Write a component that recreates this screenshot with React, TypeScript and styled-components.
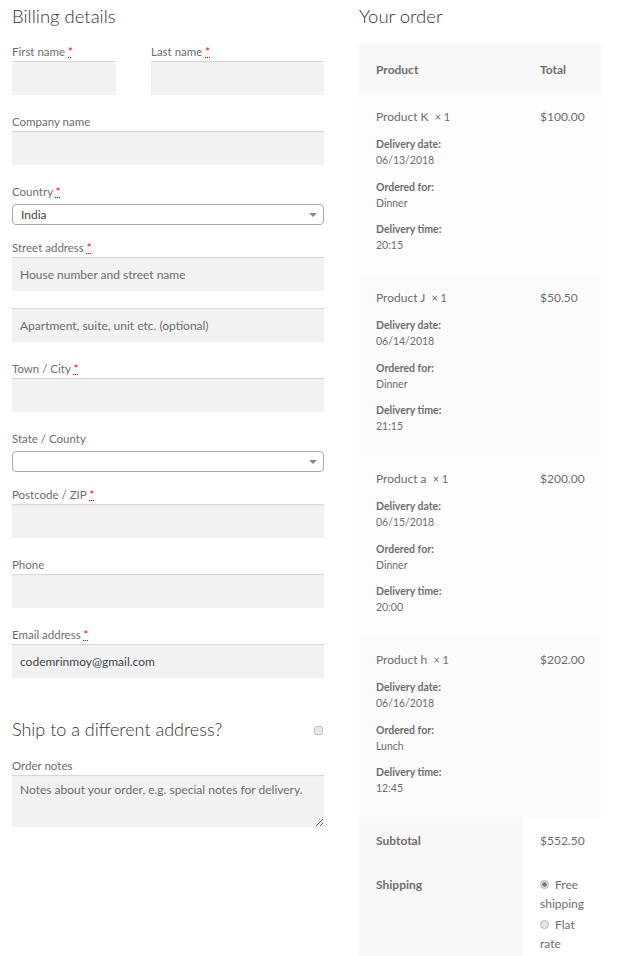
import React from 'react';
import styled, { createGlobalStyle } from 'styled-components';

const GlobalStyle = createGlobalStyle`
  body {
    margin: 0;
    background: #ffffff;
    font-family: Lato, 'Liberation Sans', sans-serif;
    color: #6d6d6d;
  }
  * { box-sizing: border-box; }
`;

const Page = styled.div`
  display: flex;
  align-items: flex-start;
  gap: 35px;
  padding: 3px 0 0 12px;
`;

const LeftColumn = styled.div`
  width: 312px;
  flex-shrink: 0;
`;

const RightColumn = styled.div`
  width: 242px;
  flex-shrink: 0;
`;

const Heading = styled.h3`
  margin: 0 0 14px;
  font-size: 18.5px;
  line-height: 26px;
  font-weight: 300;
  color: #333333;
`;

const Row = styled.div<{ $half?: number; $gap?: number }>`
  width: ${(p) => (p.$half ? `${p.$half}px` : '100%')};
  margin-bottom: ${(p) => p.$gap ?? 18}px;
`;

const HalfRows = styled.div`
  display: flex;
  justify-content: space-between;
`;

const Label = styled.label`
  display: block;
  font-size: 11.5px;
  line-height: 18px;
  color: #6d6d6d;
`;

const Required = styled.abbr`
  color: #ff0000;
  text-decoration: underline dotted #ff0000;
`;

const TextInput = styled.input<{ $mt?: number }>`
  display: block;
  width: 100%;
  height: 34px;
  margin-top: ${(p) => p.$mt ?? 0}px;
  padding: 0 8px;
  border: 0;
  outline: none;
  background: #f2f2f2;
  box-shadow: inset 0 1px 1px rgba(0, 0, 0, 0.125);
  font-family: inherit;
  font-size: 12px;
  color: #43454b;

  &::placeholder {
    color: #6d6d6d;
  }
`;

const SelectBox = styled.div`
  position: relative;
  height: 21px;
  margin-top: 3px;
  padding: 0 8px;
  border: 1px solid #aaaaaa;
  border-radius: 4px;
  background: #ffffff;
  font-size: 12px;
  line-height: 19px;
  color: #444444;

  &::after {
    content: '';
    position: absolute;
    right: 6px;
    top: 8px;
    border-style: solid;
    border-width: 4px 4px 0 4px;
    border-color: #888888 transparent transparent transparent;
  }
`;

const ShipHeading = styled.div`
  display: flex;
  align-items: center;
  justify-content: space-between;
  margin: 38px 0 15px;
`;

const ShipTitle = styled.h3`
  margin: 0;
  font-size: 18px;
  line-height: 26px;
  font-weight: 300;
  color: #333333;
`;

const Checkbox = styled.input`
  appearance: none;
  width: 9px;
  height: 9px;
  margin: 2px 1px 0 0;
  border: 1px solid #c4c4c4;
  border-radius: 2px;
  background: #e9e9e9;
`;

const Notes = styled.textarea`
  display: block;
  width: 100%;
  height: 52px;
  padding: 7px 8px;
  border: 0;
  outline: none;
  resize: vertical;
  background: #f2f2f2;
  box-shadow: inset 0 1px 1px rgba(0, 0, 0, 0.125);
  font-family: inherit;
  font-size: 12px;
  line-height: 16px;
  color: #43454b;

  &::placeholder {
    color: #6d6d6d;
  }
`;

const OrderTable = styled.table`
  width: 242px;
  margin-top: 1px;
  border-collapse: collapse;
  table-layout: fixed;
  font-size: 12px;
  color: #6d6d6d;
`;

const HeadCell = styled.th`
  padding: 18px 17px 16px;
  line-height: 17px;
  text-align: left;
  font-weight: 700;
  background: #f8f8f8;
`;

const ItemRow = styled.tr<{ $even?: boolean }>`
  background: ${(p) => (p.$even ? '#fbfbfb' : '#fdfdfd')};
`;

const ItemCell = styled.td`
  vertical-align: top;
  padding: 14px 17px 22px;
`;

const ProductLine = styled.div`
  font-size: 12px;
  line-height: 18px;

  strong {
    font-weight: 400;
    font-size: 11px;
  }
`;

const Meta = styled.dl`
  margin: 0;
  font-size: 10.5px;
  line-height: 16px;
`;

const MetaTerm = styled.dt`
  margin-top: 10.5px;
  font-weight: 700;

  &:first-of-type {
    margin-top: 10px;
  }
`;

const MetaValue = styled.dd`
  margin: 0;
`;

const FootLabel = styled.th`
  padding: 14px 17px 12px;
  line-height: 18px;
  text-align: left;
  vertical-align: top;
  font-weight: 700;
  background: #f8f8f8;
`;

const FootValue = styled.td`
  padding: 14px 17px 12px;
  line-height: 18px;
  vertical-align: top;
  background: #ffffff;
`;

const ShippingList = styled.ul`
  list-style: none;
  margin: -1px 0 0;
  padding: 0;
  line-height: 19px;
`;

const ShippingOption = styled.li`
  margin-bottom: 2px;
`;

const Radio = styled.input`
  appearance: none;
  width: 9px;
  height: 9px;
  margin: 0 6px 0 0;
  border: 1px solid #b5b5b5;
  border-radius: 50%;
  background: #e6e6e6;
  vertical-align: 0;

  &:checked {
    background: radial-gradient(circle, #7a7a7a 0 2px, #e6e6e6 2.5px);
  }
`;

const Req = () => <Required title="required">*</Required>;

const items = [
  { name: 'Product K', total: '$100.00', date: '06/13/2018', meal: 'Dinner', time: '20:15' },
  { name: 'Product J', total: '$50.50', date: '06/14/2018', meal: 'Dinner', time: '21:15' },
  { name: 'Product a', total: '$200.00', date: '06/15/2018', meal: 'Dinner', time: '20:00' },
  { name: 'Product h', total: '$202.00', date: '06/16/2018', meal: 'Lunch', time: '12:45' },
];

export default function App() {
  return (
    <>
      <GlobalStyle />
      <Page>
        <LeftColumn>
          <Heading>Billing details</Heading>
          <HalfRows>
            <Row $half={104}>
              <Label>
                First name <Req />
              </Label>
              <TextInput />
            </Row>
            <Row $half={173}>
              <Label>
                Last name <Req />
              </Label>
              <TextInput />
            </Row>
          </HalfRows>
          <Row>
            <Label>Company name</Label>
            <TextInput />
          </Row>
          <Row $gap={14}>
            <Label>
              Country <Req />
            </Label>
            <SelectBox>India</SelectBox>
          </Row>
          <Row>
            <Label>
              Street address <Req />
            </Label>
            <TextInput placeholder="House number and street name" />
            <TextInput $mt={17} placeholder="Apartment, suite, unit etc. (optional)" />
          </Row>
          <Row>
            <Label>
              Town / City <Req />
            </Label>
            <TextInput />
          </Row>
          <Row $gap={14}>
            <Label>State / County</Label>
            <SelectBox />
          </Row>
          <Row>
            <Label>
              Postcode / ZIP <Req />
            </Label>
            <TextInput />
          </Row>
          <Row>
            <Label>Phone</Label>
            <TextInput />
          </Row>
          <Row $gap={0}>
            <Label>
              Email address <Req />
            </Label>
            <TextInput defaultValue="codemrinmoy@gmail.com" />
          </Row>
          <ShipHeading>
            <ShipTitle>Ship to a different address?</ShipTitle>
            <Checkbox type="checkbox" />
          </ShipHeading>
          <Row $gap={0}>
            <Label>Order notes</Label>
            <Notes placeholder="Notes about your order, e.g. special notes for delivery." />
          </Row>
        </LeftColumn>

        <RightColumn>
          <Heading>Your order</Heading>
          <OrderTable>
            <colgroup>
              <col style={{ width: 164 }} />
              <col style={{ width: 78 }} />
            </colgroup>
            <thead>
              <tr>
                <HeadCell>Product</HeadCell>
                <HeadCell>Total</HeadCell>
              </tr>
            </thead>
            <tbody>
              {items.map((item, i) => (
                <ItemRow key={item.name} $even={i % 2 === 1}>
                  <ItemCell>
                    <ProductLine>
                      {item.name}&nbsp; <strong>×&nbsp;1</strong>
                    </ProductLine>
                    <Meta>
                      <MetaTerm>Delivery date:</MetaTerm>
                      <MetaValue>{item.date}</MetaValue>
                      <MetaTerm>Ordered for:</MetaTerm>
                      <MetaValue>{item.meal}</MetaValue>
                      <MetaTerm>Delivery time:</MetaTerm>
                      <MetaValue>{item.time}</MetaValue>
                    </Meta>
                  </ItemCell>
                  <ItemCell>
                    <ProductLine>{item.total}</ProductLine>
                  </ItemCell>
                </ItemRow>
              ))}
            </tbody>
            <tfoot>
              <tr>
                <FootLabel>Subtotal</FootLabel>
                <FootValue>$552.50</FootValue>
              </tr>
              <tr>
                <FootLabel>Shipping</FootLabel>
                <FootValue>
                  <ShippingList>
                    <ShippingOption>
                      <Radio type="radio" name="ship" defaultChecked />
                      Free shipping
                    </ShippingOption>
                    <ShippingOption>
                      <Radio type="radio" name="ship" />
                      Flat rate
                    </ShippingOption>
                  </ShippingList>
                </FootValue>
              </tr>
            </tfoot>
          </OrderTable>
        </RightColumn>
      </Page>
    </>
  );
}
